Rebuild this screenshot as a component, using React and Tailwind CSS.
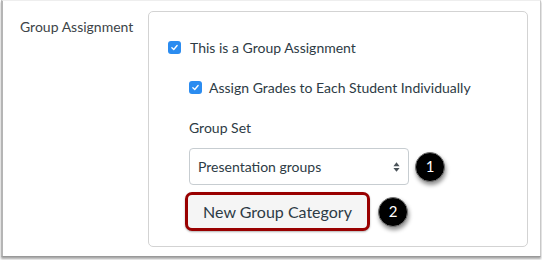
import React from 'react';

const Checkbox = () => (
    <span className="flex h-[13px] w-[13px] shrink-0 items-center justify-center rounded-[3px] bg-[#2b8cf0]">
        <svg viewBox="0 0 12 12" className="h-[9px] w-[9px]" fill="none" stroke="white" strokeWidth="1.8" strokeLinecap="round" strokeLinejoin="round">
            <path d="M2.5 6.3 L5 8.6 L9.5 3.4" />
        </svg>
    </span>
);

const Badge = ({ n }) => (
    <span className="flex h-[30px] w-[30px] shrink-0 items-center justify-center rounded-full border border-[#777] bg-black text-[15px] text-white shadow-[1px_3px_4px_rgba(0,0,0,0.45)]">
        {n}
    </span>
);

const App = () => {
    return (
        <div className="h-[260px] w-[542px] bg-white font-['Lato','Open_Sans',sans-serif] text-[#2d3b45]">
            <div className="ml-[1px] flex h-[257px] w-[540px] border-l-2 border-r border-b border-t border-l-[#b5b5b5] border-r-[#c8c8c8] border-b-[#999] border-t-[#eee] bg-white pl-[17px] pt-[10px] shadow-[0_2px_2px_rgba(0,0,0,0.35)]">
                <div className="w-[128px] pt-[6px] text-[14px] leading-5 text-[#3d4448]">Group Assignment</div>
                <div className="h-[236px] w-[380px] rounded-[5px] border border-[#d3d3d3] pl-[19px] pt-[25px]">
                    <div className="flex h-5 items-center gap-[9px] text-[14px]">
                        <Checkbox />
                        <span>This is a Group Assignment</span>
                    </div>
                    <div className="pl-[21px]">
                        <div className="mt-5 flex h-5 items-center gap-[7px] text-[14px]">
                            <Checkbox />
                            <span>Assign Grades to Each Student Individually</span>
                        </div>
                        <div className="mt-[21px] text-[14px] leading-5">Group Set</div>
                        <div className="mt-[10px] flex items-center gap-[6px]">
                            <div className="flex h-[37px] w-[220px] items-center justify-between rounded-[4px] border border-[#c7cdd1] pl-[8px] pr-[8px] text-[14px]">
                                <span>Presentation groups</span>
                                <svg viewBox="0 0 8 12" className="h-[12px] w-[7px]" fill="#4a5258">
                                    <path d="M4 0.5 L7.5 5 L0.5 5 Z" />
                                    <path d="M4 11.5 L7.5 7 L0.5 7 Z" />
                                </svg>
                            </div>
                            <Badge n="1" />
                        </div>
                        <div className="mt-[7px] ml-[-4px] flex items-center gap-[8px]">
                            <div className="flex h-[39px] w-[185px] items-center justify-center rounded-[7px] border-[3px] border-[#990000] bg-[#f5f5f5] text-[16px] text-[#2d3b45] shadow-[0_1px_2px_rgba(0,0,0,0.3)]">
                                New Group Category
                            </div>
                            <Badge n="2" />
                        </div>
                    </div>
                </div>
            </div>
        </div>
    );
};

export default App;
